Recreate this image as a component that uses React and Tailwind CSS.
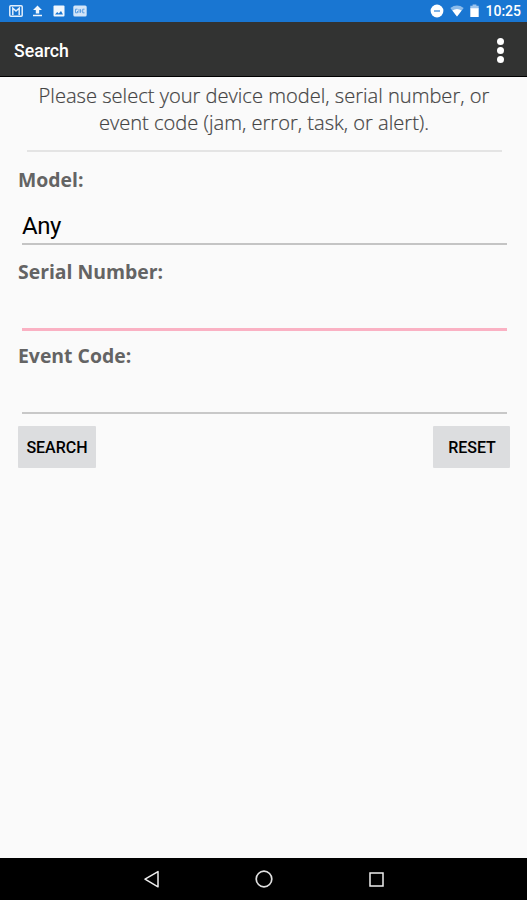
import { useState } from 'react';

export default function App() {
  const [model, setModel] = useState('Any');
  const [serial, setSerial] = useState('');
  const [eventCode, setEventCode] = useState('');

  const handleReset = () => {
    setModel('Any');
    setSerial('');
    setEventCode('');
  };

  return (
    <div className="flex h-[900px] w-[527px] flex-col overflow-hidden bg-[#fafafa] font-['Roboto',sans-serif]">
      <StatusBar />

      <header className="flex h-[55px] shrink-0 items-center justify-between border-b border-black bg-[#323332] pl-[14px] pr-[23px] pt-[2px]">
        <h1 className="pt-[3px] text-[17.7px] font-medium leading-none text-white">Search</h1>
        <button aria-label="More options" className="flex flex-col gap-[2px]">
          <span className="h-[7px] w-[7px] rounded-full bg-white" />
          <span className="h-[7px] w-[7px] rounded-full bg-white" />
          <span className="h-[7px] w-[7px] rounded-full bg-white" />
        </button>
      </header>

      <main className="flex-1 pl-[18px] pr-[17px] pt-[5px] font-['Open_Sans',sans-serif]">
        <p className="text-center text-[20.1px] font-light leading-[27px] text-[#444444] [-webkit-text-stroke:0.2px_#444444]">
          Please select your device model, serial number, or
          <br />
          event code (jam, error, task, or alert).
        </p>
        <div className="ml-[9px] mr-2 mt-[14px] h-[2px] bg-[#e4e4e4]" />

        {/* Form */}
        <Field id="model" label="Model:" value={model} onChange={setModel} className="mt-[14px]" inputClass="h-[52px] border-b-2 border-[#c4c4c4]" />
        <Field id="serial" label="Serial Number:" value={serial} onChange={setSerial} className="mt-[13px]" inputClass="h-[46px] border-b-3 border-[#fab1c3]" />
        <Field id="event" label="Event Code:" value={eventCode} onChange={setEventCode} className="mt-[11px]" inputClass="h-[45px] border-b-2 border-[#c8c8c8]" />

        <div className="mt-3 flex justify-between font-['Roboto',sans-serif] text-base font-medium text-black">
          <button className="h-[42px] w-[78px] rounded-[1px] bg-[#dcdddf] pt-[2px]">SEARCH</button>
          <button onClick={handleReset} className="h-[42px] w-[77px] rounded-[1px] bg-[#dcdddf] pl-px pt-[2px]">RESET</button>
        </div>
      </main>

      <NavBar />
    </div>
  );
}

function Field({ id, label, value, onChange, className, inputClass }) {
  return (
    <div className={className}>
      <label htmlFor={id} className="block text-[19.4px] font-bold leading-[27px] text-[#646464]">{label}</label>
      <div className="pl-1 pr-[3px]">
        <input
          id={id}
          value={value}
          onChange={(e) => onChange(e.target.value)}
          className={`block w-full pt-4 font-['Roboto',sans-serif] text-[24px] leading-7 tracking-[-0.4px] text-black outline-none ${inputClass}`}
        />
      </div>
    </div>
  );
}

function StatusBar() {
  return (
    <div className="flex h-[22px] shrink-0 items-center justify-between bg-[#1976d2] pl-[9px] pr-[6px] text-white">
      <div className="flex items-center">
        <svg width="14" height="12" viewBox="0 0 14 12" fill="none" stroke="#e3effb" strokeWidth="1.5">
          <rect x="0.8" y="0.8" width="12.4" height="10.4" rx="1" />
          <path d="M3.8 10V3.2L7 6L10.2 3.2V10" />
        </svg>
        <svg className="ml-[9px]" width="11" height="12" viewBox="0 0 11 12" fill="#f1f7fd">
          <path d="M5.5 0.5L10 5H7.2V8.5H3.8V5H1zM1 9.8H10V11.3H1z" />
        </svg>
        <svg className="ml-[10px]" width="12" height="12" viewBox="0 0 12 12">
          <rect x="0.5" y="0.5" width="11" height="11" rx="1" fill="#f1f7fd" />
          <path d="M2 9.5L4.2 7L5.7 8.5L8 6L10 9.5z" fill="#1976d2" />
        </svg>
        <svg className="ml-2" width="14" height="12" viewBox="0 0 14 12">
          <rect x="0.3" y="0.5" width="13.4" height="11" rx="1.5" fill="#d3e5f8" />
          <path d="M4.5 4.2H2.5V7.8H4.5V6M6 4.2V7.8M7.5 4.2V7.8M7.5 6H8.5M11.5 4.2H9.7V7.8H11.5" fill="none" stroke="#5c9fe2" />
        </svg>
      </div>

      <div className="flex items-center">
        <svg width="14" height="14" viewBox="0 0 14 14">
          <circle cx="7" cy="7" r="6.4" fill="white" />
          <path d="M4 7H10" stroke="#6aa6e2" strokeWidth="1.7" />
        </svg>
        <svg className="ml-[6px]" width="14" height="12" viewBox="0 0 14 12">
          <path d="M0.3 3Q7-1.8 13.7 3L7 11.6z" fill="#8bbbea" />
          <path d="M2.4 5.4Q7 2.4 11.6 5.4L7 11.6z" fill="white" />
        </svg>
        <svg className="ml-[6px]" width="9" height="14" viewBox="0 0 9 14">
          <path d="M0.3 1.8H2.6V0.5H6.4V1.8H8.7V4.8H0.3z" fill="#9bc4ed" />
          <path d="M0.3 4.2H8.7V13H0.3z" fill="white" />
        </svg>
        <span className="ml-[6px] text-[14px] font-medium leading-none">10:25</span>
      </div>
    </div>
  );
}

function NavBar() {
  return (
    <nav className="flex h-[42px] shrink-0 items-center justify-between bg-black px-[143px]">
      <svg width="16" height="18" viewBox="0 0 16 18" fill="none" stroke="#eeeeee" strokeWidth="1.5" strokeLinejoin="round">
        <path d="M15 1.6L2 9.2L15 16.8z" />
      </svg>
      <svg width="18" height="18" viewBox="0 0 18 18" fill="none" stroke="#e0e0e0" strokeWidth="1.7">
        <circle cx="9" cy="9" r="7.8" />
      </svg>
      <svg width="15" height="15" viewBox="0 0 15 15" fill="none" stroke="#eeeeee" strokeWidth="1.5">
        <rect x="1" y="1" width="13" height="13" />
      </svg>
    </nav>
  );
}
